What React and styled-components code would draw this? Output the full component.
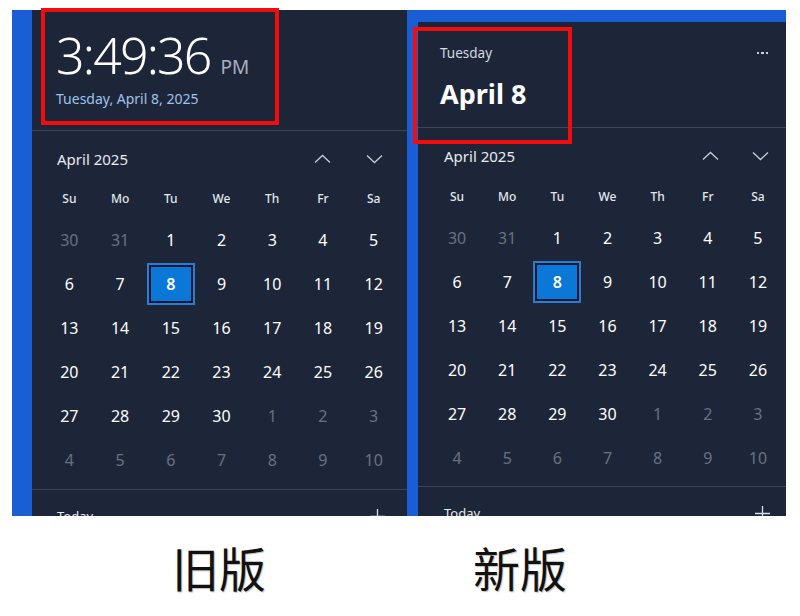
import React from 'react';
import styled, { createGlobalStyle } from 'styled-components';

const GlobalStyle = createGlobalStyle`
	html, body {
		margin: 0;
		background: #ffffff;
	}
	body {
		font-family: "Noto Sans", "Open Sans", sans-serif;
		font-stretch: semi-condensed;
	}
`;

const Page = styled.div`
	width: 800px;
	height: 616px;
	overflow: hidden;
`;
const Shots = styled.div`
	display: flex;
	padding: 10px 0 0 12px;
`;
const Shot = styled.div`
	position: relative;
	display: flex;
	box-sizing: border-box;
	width: ${(p) => p.$width}px;
	height: 506px;
	padding: ${(p) => p.$pad};
	background: #1a5ed6;
`;
const Panel = styled.div`
	flex: 1;
	display: flex;
	flex-direction: column;
	overflow: hidden;
	background: #1d2638;
	color: #ffffff;
	& > * {
		flex-shrink: 0;
	}
`;
const Highlight = styled.div`
	position: absolute;
	left: ${(p) => p.$x}px;
	top: ${(p) => p.$y}px;
	width: ${(p) => p.$w}px;
	height: ${(p) => p.$h}px;
	box-sizing: border-box;
	border: 4px solid #f20c0c;
`;

/* old header */
const ClockHeader = styled.div`
	box-sizing: border-box;
	height: 121px;
	padding: 20px 0 0 24px;
	border-bottom: 1px solid #3a4558;
`;
const Clock = styled.div`
	display: flex;
	align-items: baseline;
	line-height: 1;
`;
const Time = styled.span`
	font-size: 50px;
	font-weight: 300;
	font-stretch: condensed;
	letter-spacing: -1.8px;
`;
const Meridiem = styled.span`
	margin-left: 10px;
	font-size: 19px;
	font-stretch: condensed;
	color: #a8b0bd;
`;
const LongDate = styled.div`
	margin-top: 9px;
	font-size: 14px;
	color: #9fc2ec;
`;

/* new header */
const DateHeader = styled.div`
	box-sizing: border-box;
	height: 106px;
	padding: 21px 18px 0 22px;
	border-bottom: 1px solid #3a4558;
`;
const HeaderRow = styled.div`
	display: flex;
	justify-content: space-between;
	align-items: center;
	height: 20px;
`;
const DayName = styled.span`
	font-size: 13.5px;
	color: #d5d9e0;
`;
const More = styled.span`
	display: flex;
	gap: 2px;
	span {
		width: 2.5px;
		height: 2.5px;
		background: #c9ced8;
	}
`;
const BigDate = styled.div`
	margin-top: 14px;
	font-size: 27px;
	font-weight: 700;
	line-height: 34px;
`;

/* calendar */
const MonthBar = styled.div`
	display: flex;
	align-items: center;
	justify-content: space-between;
	box-sizing: border-box;
	height: ${(p) => p.$h}px;
	padding: 8px ${(p) => p.$right}px 0 ${(p) => p.$left}px;
`;
const MonthLabel = styled.span`
	font-size: 15px;
	color: #e8ebf0;
`;
const Chevrons = styled.div`
	display: flex;
	gap: ${(p) => p.$gap}px;
	color: #c6ccd6;
`;
const Grid = styled.div`
	display: grid;
	grid-template-columns: repeat(7, 1fr);
	width: ${(p) => p.$w}px;
	margin-left: ${(p) => p.$left}px;
`;
const WeekDay = styled.div`
	display: flex;
	align-items: center;
	justify-content: center;
	height: 40px;
	font-size: 12px;
	font-weight: 500;
	color: #e3e6ec;
`;
const Day = styled.div`
	display: flex;
	align-items: center;
	justify-content: center;
	height: 44px;
	font-size: 16px;
	color: ${(p) => (p.$muted ? '#687183' : '#ffffff')};
`;
const TodayBox = styled.div`
	display: flex;
	align-items: center;
	justify-content: center;
	box-sizing: border-box;
	width: 48px;
	height: 42px;
	border: 2px solid #2a7ed2;
	box-shadow: inset 0 0 0 2px #0b1730;
	background: #0b78d8;
	font-weight: 600;
`;
const Footer = styled.div`
	display: flex;
	justify-content: space-between;
	align-items: center;
	margin-top: ${(p) => p.$top}px;
	padding: 17px ${(p) => p.$right}px 0 ${(p) => p.$left}px;
	border-top: 1px solid #3a4558;
	font-size: 13px;
	color: #e3e6ec;
`;

/* captions */
const Captions = styled.div`
	display: flex;
	padding: 27px 0 0 172px;
	gap: 207px;
`;
const Caption = styled.span`
	font-family: "Noto Sans CJK SC", sans-serif;
	font-stretch: normal;
	font-size: 47px;
	line-height: 1;
	color: #111111;
	text-shadow: 1px 1px 1px rgba(0, 0, 0, 0.25);
`;

const Chevron = ({ down }) => (
	<svg width="17" height="10" viewBox="0 0 17 10">
		<path
			d={down ? 'M1 1.5 L8.5 8.5 L16 1.5' : 'M1 8.5 L8.5 1.5 L16 8.5'}
			fill="none"
			stroke="currentColor"
			strokeWidth="1.3"
		/>
	</svg>
);

const Plus = () => (
	<svg width="15" height="15" viewBox="0 0 15 15">
		<path d="M7.5 0 V15 M0 7.5 H15" stroke="#d9dde4" strokeWidth="1.3" />
	</svg>
);

const weekDays = ['Su', 'Mo', 'Tu', 'We', 'Th', 'Fr', 'Sa'];

const days = [];
[30, 31].forEach((d) => days.push({ d, muted: true }));
for (let d = 1; d <= 30; d++) days.push({ d, today: d === 8 });
for (let d = 1; d <= 10; d++) days.push({ d, muted: true });

const Calendar = ({ barH, barLeft, barRight, chevGap, gridW, gridLeft, footTop, footLeft, footRight }) => (
	<>
		<MonthBar $h={barH} $left={barLeft} $right={barRight}>
			<MonthLabel>April 2025</MonthLabel>
			<Chevrons $gap={chevGap}>
				<Chevron />
				<Chevron down />
			</Chevrons>
		</MonthBar>
		<Grid $w={gridW} $left={gridLeft}>
			{weekDays.map((w) => (
				<WeekDay key={w}>{w}</WeekDay>
			))}
			{days.map(({ d, muted, today }, i) => (
				<Day key={i} $muted={muted}>
					{today ? <TodayBox>{d}</TodayBox> : d}
				</Day>
			))}
		</Grid>
		<Footer $top={footTop} $left={footLeft} $right={footRight}>
			<span>Today</span>
			<Plus />
		</Footer>
	</>
);

const App = () => {
	return (
		<Page>
			<GlobalStyle />
			<Shots>
				<Shot $width={395} $pad="0 0 0 20px">
					<Panel>
						<ClockHeader>
							<Clock>
								<Time>3:49:36</Time>
								<Meridiem>PM</Meridiem>
							</Clock>
							<LongDate>Tuesday, April 8, 2025</LongDate>
						</ClockHeader>
						<Calendar
							barH={47}
							barLeft={25}
							barRight={24}
							chevGap={35}
							gridW={355}
							gridLeft={12}
							footTop={7}
							footLeft={25}
							footRight={22}
						/>
					</Panel>
					<Highlight $x={29} $y={-2} $w={238} $h={117} />
				</Shot>
				<Shot $width={379} $pad="12px 0 0 11px">
					<Panel>
						<DateHeader>
							<HeaderRow>
								<DayName>Tuesday</DayName>
								<More>
									<span />
									<span />
									<span />
								</More>
							</HeaderRow>
							<BigDate>April 8</BigDate>
						</DateHeader>
						<Calendar
							barH={48}
							barLeft={26}
							barRight={17}
							chevGap={33}
							gridW={351}
							gridLeft={14}
							footTop={6}
							footLeft={26}
							footRight={16}
						/>
					</Panel>
					<Highlight $x={6} $y={17} $w={159} $h={117} />
				</Shot>
			</Shots>
			<Captions>
				<Caption>旧版</Caption>
				<Caption>新版</Caption>
			</Captions>
		</Page>
	);
};

export default App;
